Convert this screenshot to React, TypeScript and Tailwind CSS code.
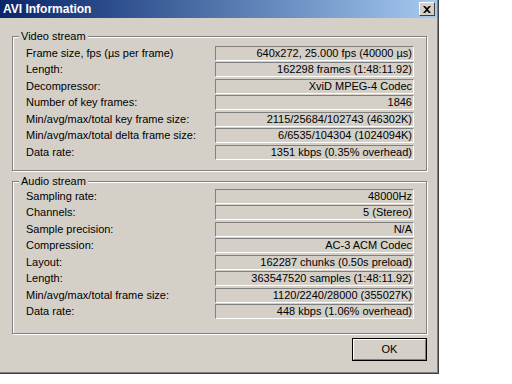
import React from "react";

const video: [string, string][] = [
  ["Frame size, fps (µs per frame)", "640x272, 25.000 fps (40000 µs)"],
  ["Length:", "162298 frames (1:48:11.92)"],
  ["Decompressor:", "XviD MPEG-4 Codec"],
  ["Number of key frames:", "1846"],
  ["Min/avg/max/total key frame size:", "2115/25684/102743 (46302K)"],
  ["Min/avg/max/total delta frame size:", "6/6535/104304 (1024094K)"],
  ["Data rate:", "1351 kbps (0.35% overhead)"],
];

const audio: [string, string][] = [
  ["Sampling rate:", "48000Hz"],
  ["Channels:", "5 (Stereo)"],
  ["Sample precision:", "N/A"],
  ["Compression:", "AC-3 ACM Codec"],
  ["Layout:", "162287 chunks (0.50s preload)"],
  ["Length:", "363547520 samples (1:48:11.92)"],
  ["Min/avg/max/total frame size:", "1120/2240/28000 (355027K)"],
  ["Data rate:", "448 kbps (1.06% overhead)"],
];

function Rows({ rows }: { rows: [string, string][] }) {
  return (
    <div className="flex flex-col">
      {rows.map(([l, v], i) => (
        <div
          key={i}
          className={`flex items-center h-[15px] ${i === 0 ? "" : i % 2 === 1 ? "mt-[1px]" : "mt-[2px]"}`}
        >
          <div className="w-[202px] pl-[13px] leading-[15px] whitespace-nowrap">{l}</div>
          <div className="w-[199px] h-[15px] border-t border-l border-[#808080] border-r-white border-b-white border-r border-b text-right pr-[1px] leading-[13px] whitespace-nowrap">
            {v}
          </div>
        </div>
      ))}
    </div>
  );
}

function Group({ title, rows, pt, pb }: { title: string; rows: [string, string][]; pt: string; pb: string }) {
  return (
    <fieldset
      className={`border border-[#808080] shadow-[inset_1px_1px_0_#fff,1px_1px_0_#fff] ml-[12px] w-[415px] ${pt} ${pb} px-0 m-0`}
    >
      <legend className="ml-[6px] px-[2px] bg-[#d4d0c8] leading-[13px]">{title}</legend>
      <Rows rows={rows} />
    </fieldset>
  );
}

export default function App() {
  return (
    <div
      className="w-[512px] h-[384px] bg-white text-black text-[11px]"
      style={{ fontFamily: '"Liberation Sans", Arial, sans-serif' }}
    >
      <div className="w-[439px] h-[374px] bg-[#d4d0c8] border-r border-b border-[#404040]">
        <div className="w-[438px] h-[373px] border-r border-b border-[#808080] flex flex-col">
          <div className="h-[18px] flex items-center justify-between bg-gradient-to-r from-[#0a246a] to-[#a6caf0] pl-[3px] pr-[2px]">
            <span className="text-white font-bold text-[12px] leading-none">AVI Information</span>
            <div className="w-[16px] h-[14px] bg-[#d4d0c8] border-t border-l border-white border-r border-b border-r-[#404040] border-b-[#404040] flex items-center justify-center">
              <svg width="8" height="7" viewBox="0 0 8 7">
                <path d="M0 0h2l2 2 2-2h2L5 3.5 8 7H6L4 5 2 7H0l3-3.5z" fill="#000" />
              </svg>
            </div>
          </div>
          <div className="pt-[12px]">
            <Group title="Video stream" rows={video} pt="pt-[3px]" pb="pb-[10px]" />
          </div>
          <div className="pt-[4px]">
            <Group title="Audio stream" rows={audio} pt="pt-[1px]" pb="pb-[14px]" />
          </div>
          <div className="flex justify-end pr-[10px] pt-[4px]">
            <button className="w-[75px] h-[23px] border border-black flex">
              <span className="flex-1 flex items-center justify-center border-t border-l border-white border-r border-b border-r-[#808080] border-b-[#808080] text-[11px]">
                OK
              </span>
            </button>
          </div>
        </div>
      </div>
    </div>
  );
}
